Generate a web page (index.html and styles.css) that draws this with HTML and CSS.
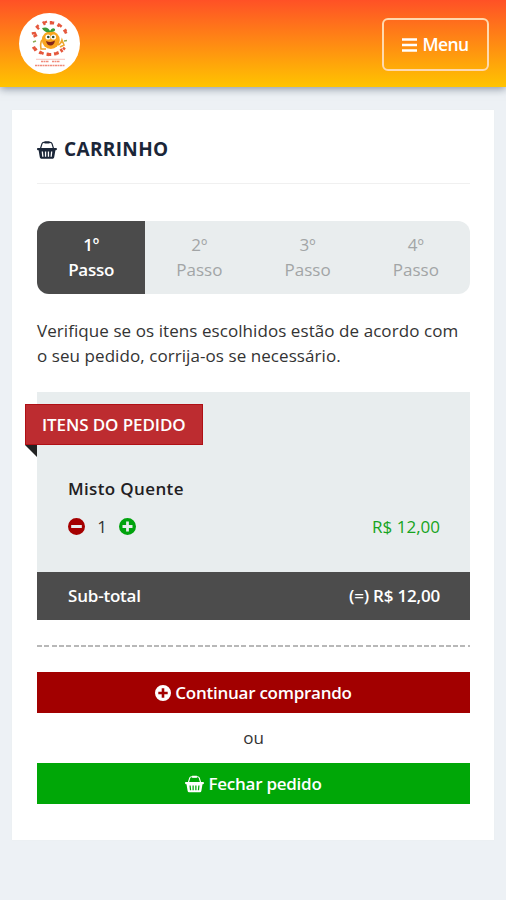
FILE: index.html
```html
<!DOCTYPE html>
<html lang="pt-BR">
<head>
<meta charset="utf-8">
<title>Carrinho</title>
<link rel="stylesheet" href="styles.css">
</head>
<body>
<svg class="defs" width="0" height="0">
  <symbol id="basket" viewBox="0 0 20 18">
    <path d="M3.500 7.500 5 2.600Q5.400 1.400 6.800 1.400H13.200Q14.600 1.400 15 2.600L16.500 7.500" fill="none" stroke="currentColor" stroke-width="1.200"/>
    <path d="M7.500 .3h5v2.200h-5z" fill="currentColor"/>
    <path fill="currentColor" fill-rule="evenodd" d="M1 7H19Q20 7 20 8T19 9.200H18.400L17.200 16.300Q17 17.700 15.700 17.700H4.300Q3 17.700 2.800 16.300L1.600 9.200H1Q0 9.200 0 8T1 7ZM4.700 10.500 5.200 15.700H6.500L6 10.500ZM7.900 10.500V15.700H9.200V10.500ZM10.800 10.500V15.700H12.100V10.500ZM14 10.500 13.500 15.700H14.800L15.300 10.500Z"/>
  </symbol>
  <symbol id="plus" viewBox="0 0 16 16">
    <path fill="currentColor" fill-rule="evenodd" d="M8 0a8 8 0 1 0 0 16A8 8 0 0 0 8 0ZM6.700 3.300H9.300V6.700H12.700V9.300H9.300V12.700H6.700V9.300H3.300V6.700H6.700Z"/>
  </symbol>
  <symbol id="minus" viewBox="0 0 16 16">
    <path fill="currentColor" fill-rule="evenodd" d="M8 0a8 8 0 1 0 0 16A8 8 0 0 0 8 0ZM3 6.600H13V9.400H3Z"/>
  </symbol>
</svg>
<header class="topbar">
  <svg class="logo" viewBox="0 0 61 61">
    <circle cx="30.5" cy="30.5" r="30.5" fill="#fff"/>
    <g fill="none" stroke="#e5573c" stroke-width="2.400">
      <path d="M12.800 20.500l3-.5 1.200 2.500-2.500 1.200"/>
      <path d="M17 13l3 3.200M19.600 12.200l-2.600 2.500"/>
      <path d="M24 8.500l2 3.300M26.500 8l.7 2"/>
      <path d="M32 8v3.600M34.200 8.200l-.5 3.200"/>
      <path d="M40.500 10.500l-1.800 3.200M42.500 12l-1.600 2"/>
      <path d="M47.500 16.500l-3 2M48 19l-2.500 1"/>
      <path d="M13.500 35.500l3-1.500M15 37.500l3-1.800"/>
      <path d="M20.500 41l1.600-3M23 41.500l1-2.500"/>
      <path d="M28.500 43l.5-3.400M31 43v-3"/>
      <path d="M36.500 42.400l-.6-3.300M39 41.500l-1-3"/>
      <path d="M43.500 39l-2-3M46 36.500l-2-1.800"/>
    </g>
    <path d="M14 29l3-1M45 28l3-.5" stroke="#8dac54" stroke-width="1.500"/>
    <path d="M23 27q-2 3-1 9h5M39 32q3-1 4-5l2 5-4 2" fill="none" stroke="#eea72f" stroke-width="1.600"/>
    <ellipse cx="31.800" cy="27" rx="9" ry="9" fill="#f9a51f"/>
    <path d="M31 19q-6 1-8-4 6-2 8 3 2-4 5-2 1 3-5 3Z" fill="#3b9b38"/>
    <circle cx="29" cy="24" r="2.600" fill="#fff"/><circle cx="34.500" cy="24" r="2.600" fill="#fff"/>
    <circle cx="29.300" cy="24" r="1.300" fill="#324b2e"/><circle cx="34.200" cy="24" r="1.300" fill="#324b2e"/>
    <path d="M27 28q5 2 9-.5-1 5-4.500 5T27 28Z" fill="#81251c"/>
    <path d="M17 46.300H46" stroke="#f3a99d" stroke-width=".7"/>
    <path d="M22 48.500H30M33 48.500H41M16 52.500H46" stroke="#f08b7b" stroke-width="1.600" stroke-dasharray="2 .5"/>
  </svg>
  <button class="menu"><svg class="bars" viewBox="0 0 15 14"><path d="M0 1.500H15M0 7H15M0 12.500H15" stroke="currentColor" stroke-width="2.400"/></svg><span>Menu</span></button>
</header>
<main class="card">
  <h1 class="title"><svg class="title-icon"><use href="#basket"/></svg><span>CARRINHO</span></h1>
  <ol class="steps">
    <li class="step active">1º<br>Passo</li>
    <li class="step">2º<br>Passo</li>
    <li class="step">3º<br>Passo</li>
    <li class="step">4º<br>Passo</li>
  </ol>
  <p class="intro">Verifique se os itens escolhidos estão de acordo com<br>o seu pedido, corrija-os se necessário.</p>
  <section class="order">
    <h2 class="ribbon"><span>ITENS DO PEDIDO</span></h2>
    <div class="item">
      <h3 class="name">Misto Quente</h3>
      <div class="line">
        <svg class="qty-icon remove"><use href="#minus"/></svg>
        <span class="qty">1</span>
        <svg class="qty-icon add"><use href="#plus"/></svg>
        <span class="price">R$ 12,00</span>
      </div>
    </div>
    <div class="subtotal"><span>Sub-total</span><span class="sum">(=) R$ 12,00</span></div>
  </section>
  <hr class="divider">
  <button class="action continue"><svg class="plus-icon"><use href="#plus"/></svg><span>Continuar comprando</span></button>
  <p class="or">ou</p>
  <button class="action checkout"><svg class="basket-icon"><use href="#basket"/></svg><span>Fechar pedido</span></button>
</main>
</body>
</html>
```

FILE: styles.css
```css
* { box-sizing: border-box; }
body { margin: 0; min-height: 900px; background: #edf1f5; color: #333; font: 17px/25px "Open Sans", sans-serif; }
h1, h2, h3, p, ol { margin: 0; padding: 0; font-size: inherit; }
button { font: inherit; color: #fff; cursor: pointer; }
svg { flex: none; }
.defs { display: block; position: absolute; }
.topbar { height: 87px; display: flex; justify-content: space-between; align-items: flex-start; padding: 13px 17px 0 19px; background: linear-gradient(#ff5126, #ffc400); box-shadow: 0 2px 8px rgba(60, 75, 95, .55); }
.logo { width: 61px; height: 61px; }
.menu { width: 107px; height: 53px; margin-top: 5px; padding: 0; display: flex; align-items: center; justify-content: center; gap: 5px; background: transparent; border: 2px solid #ffd9ae; border-radius: 6px; font-weight: 600; font-size: 17.5px; letter-spacing: -.6px; }
.bars { width: 15px; height: 14px; }
.card { width: 482px; height: 730px; margin: 23px 0 0 12px; padding: 25px 24px 0 25px; background: #fff; box-shadow: 0 0 1px #e6eaee; }
.title { height: 49px; display: flex; align-items: flex-start; gap: 7px; border-bottom: 1px solid #f0f0f0; color: #1b2638; font-weight: 700; font-size: 19px; letter-spacing: .35px; }
.title span { line-height: 28px; }
.title-icon { width: 20px; height: 18px; margin-top: 6px; }
.steps { height: 73px; margin-top: 37px; display: grid; grid-template-columns: repeat(4, 1fr); overflow: hidden; list-style: none; border-radius: 12px; background: #e9edee; color: #a2a5a6; text-align: center; }
.step { padding-top: 12px; line-height: 24.500px; }
.active { background: #4b4b4b; color: #fff; font-weight: 600; letter-spacing: -.25px; }
.intro { margin-top: 24px; white-space: nowrap; letter-spacing: .07px; }
.order { margin-top: 24px; height: 228px; background: #e8edee; padding-top: 12px; }
.ribbon { position: relative; width: 178px; height: 41px; margin-left: -12px; padding-left: 16px; border: 1px solid #af1015; background: #bd2c30; color: #fff; font-weight: 600; letter-spacing: -.1px; line-height: 39px; }
.ribbon::after { content: ""; position: absolute; left: -1px; top: 40px; border-top: 12px solid #222; border-left: 12px solid transparent; }
.item { height: 127px; padding: 31px 30px 0 31px; }
.name { color: #1f2022; font-weight: 600; letter-spacing: .36px; }
.line { display: flex; align-items: center; margin-top: 13px; }
.qty-icon { width: 17px; height: 17px; }
.remove { color: #a50000; }
.add { color: #00a30d; }
.qty { width: 34px; text-align: center; }
.price { margin-left: auto; color: #16a421; }
.subtotal { height: 48px; padding: 0 30px 1px 31px; display: flex; align-items: center; justify-content: space-between; background: #4c4c4c; color: #fff; font-weight: 600; letter-spacing: -.2px; }
.divider { height: 2px; margin: 25px 0; border: 0; background: repeating-linear-gradient(90deg, #b8b8b8 0 5px, #fff 5px 7.300px); }
.action { width: 100%; height: 41px; padding: 0; border: 0; display: flex; align-items: center; justify-content: center; gap: 4px; font-weight: 600; letter-spacing: -.25px; }
.continue { background: #a20000; }
.checkout { background: #00a707; }
.plus-icon { width: 16px; height: 16px; }
.basket-icon { width: 19px; height: 18px; }
.or { height: 50px; line-height: 49px; text-align: center; }
```
